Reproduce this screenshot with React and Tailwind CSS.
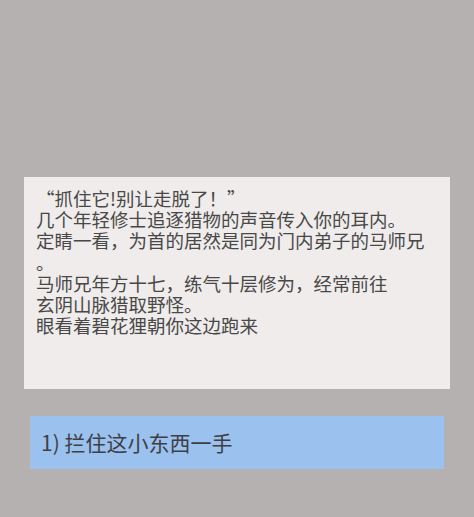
import React from 'react'

const lines = [
  '“抓住它!别让走脱了！”',
  '几个年轻修士追逐猎物的声音传入你的耳内。',
  '定睛一看，为首的居然是同为门内弟子的马师兄',
  '。',
  '马师兄年方十七，练气十层修为，经常前往',
  '玄阴山脉猎取野怪。',
  '眼看着碧花狸朝你这边跑来',
]

const App = () => {
  return (
    <div
      className="w-[474px] h-[517px] bg-[#b5b1b0] flex flex-col pt-[177px]"
      style={{ fontFamily: '"Noto Sans CJK SC", "Noto Sans", sans-serif' }}
    >
      {/* Story panel */}
      <div className="ml-[24px] w-[426px] h-[212px] bg-[#efeceb] pl-[12px] pt-[11px] text-[18.5px] leading-[21.2px] text-[#484848] whitespace-nowrap">
        {lines.map((l, i) => (
          <div key={i}>{l}</div>
        ))}
      </div>

      {/* Choice */}
      <div className="ml-[30px] mt-[27px] w-[414px] h-[53px] bg-[#9bc1ee] flex items-center pl-[11px] text-[21px] text-[#3e3f44]">
        1) 拦住这小东西一手
      </div>
    </div>
  )
}

export default App
